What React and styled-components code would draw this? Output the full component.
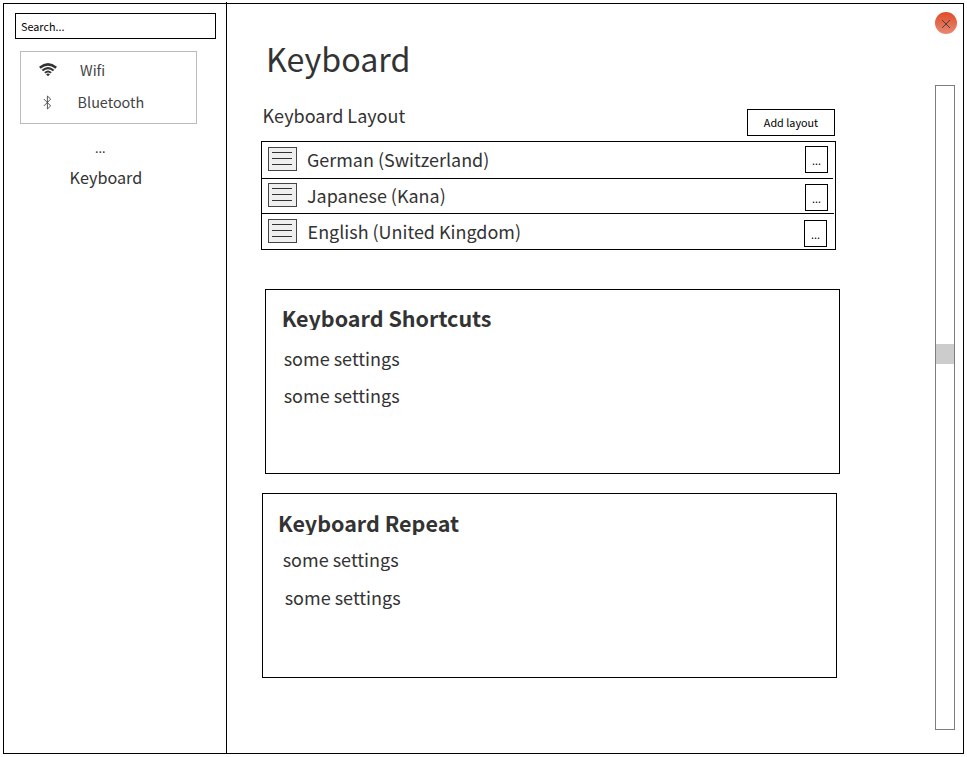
import React from "react";
import styled, { createGlobalStyle } from "styled-components";

const GlobalStyle = createGlobalStyle`
  * { box-sizing: border-box; }
  body {
    margin: 0;
    background: #fff;
    color: #333;
    font-family: "Noto Sans CJK SC", "Noto Sans", sans-serif;
  }
  button, input { font-family: inherit; border-radius: 0; }
`;

const Window = styled.div`
  display: flex;
  width: 961px;
  height: 751px;
  margin: 3px;
  border: 1px solid #000;
`;

const Sidebar = styled.aside`
  flex: none;
  display: flex;
  flex-direction: column;
  align-items: flex-start;
  width: 223px;
  margin-top: -2px;
  padding: 11px 0 0 11px;
  border-right: 1px solid #000;
`;

const Search = styled.input`
  width: 201px;
  height: 26px;
  padding: 0 5px 1px;
  border: 1px solid #000;
  background: #fff;
  font-size: 10.8px;
  &::placeholder { color: #000; opacity: 1; }
`;

const Devices = styled.nav`
  width: 177px;
  height: 73px;
  margin: 12px 0 0 5px;
  padding-top: 2px;
  border: 1px solid #bbb;
`;

const Device = styled.div`
  display: flex;
  align-items: center;
  height: 32px;
  color: #444;
  font-size: 14.4px;
  line-height: 32px;
`;

const DeviceIcon = styled.span`
  display: flex;
  justify-content: center;
  width: ${(p) => p.$width}px;
  margin: 0 ${(p) => p.$gap}px 0 17px;
`;

const More = styled.div`
  margin: 14px 0 0 80px;
  font-size: 12.6px;
  line-height: 20px;
`;

const CurrentPage = styled.div`
  margin: 7px 0 0 54.6px;
  font-size: 16.2px;
  line-height: 24px;
`;

const Main = styled.main`
  flex: 1;
  display: flex;
  justify-content: space-between;
  padding-left: 34px;
`;

const Content = styled.div`
  width: 579px;
`;

const Title = styled.h1`
  margin: 30px 0 0 5px;
  font-size: 32.2px;
  font-weight: 400;
  line-height: 48px;
`;

const SectionHeader = styled.div`
  display: flex;
  justify-content: space-between;
  width: 574px;
  margin-top: 27px;
`;

const SectionTitle = styled.h2`
  margin: 0 0 0 1.6px;
  font-size: 18px;
  font-weight: 400;
  line-height: 12px;
`;

const AddButton = styled.button`
  width: 88px;
  height: 27px;
  padding: 0 0 2px;
  border: 1px solid #000;
  background: #fff;
  color: #000;
  font-size: 10.8px;
`;

const LayoutList = styled.div`
  width: 575px;
  height: 109px;
  margin-top: 5px;
  border: 1px solid #000;
`;

const LayoutRow = styled.div`
  display: flex;
  align-items: flex-start;
  height: ${(p) => p.$height}px;
  margin-right: ${(p) => p.$inset}px;
  padding-left: 6px;
  border-bottom: ${(p) => (p.$last ? "none" : "1px solid #000")};
`;

const Handle = styled.span`
  flex: none;
  display: flex;
  flex-direction: column;
  gap: 5px;
  width: 29px;
  height: 24px;
  margin-top: ${(p) => p.$top}px;
  padding: 4px 4px 0 3px;
  border: 1px solid #444;
  background: #efefef;
`;

const HandleLine = styled.i`
  height: 1px;
  background: #333;
`;

const LayoutName = styled.span`
  flex: 1;
  margin: ${(p) => p.$top}px 0 0 ${(p) => p.$left}px;
  font-size: 17.95px;
  line-height: 26px;
`;

const RowMenu = styled.button`
  flex: none;
  width: 23px;
  height: 27px;
  margin: ${(p) => p.$top}px ${(p) => p.$right}px 0 0;
  padding: 0;
  border: 1px solid #000;
  background: #fff;
  color: #000;
  font-size: 10.8px;
`;

const Card = styled.section`
  width: 575px;
  height: 185px;
  margin: ${(p) => p.$gap}px 0 0 ${(p) => p.$left}px;
  padding: ${(p) => p.$pad}px 0 0 15px;
  border: 1px solid #000;
`;

const CardTitle = styled.h2`
  height: 27px;
  margin: 0 0 0 ${(p) => p.$left}px;
  overflow: hidden;
  font-size: 21.5px;
  font-weight: 700;
  line-height: 30px;
`;

const Setting = styled.p`
  margin: ${(p) => p.$gap}px 0 0 ${(p) => p.$left}px;
  font-size: 18px;
  line-height: 26px;
`;

const Rail = styled.div`
  display: flex;
  flex-direction: column;
  align-items: flex-start;
  width: 28px;
  padding-top: 8px;
`;

const CloseButton = styled.button`
  display: flex;
  align-items: center;
  justify-content: center;
  width: 22px;
  height: 22px;
  padding: 1px 0 0;
  border: 0;
  && { border-radius: 50%; }
  background: linear-gradient(#df4c28, #e98872);
`;

const Scrollbar = styled.div`
  width: 20px;
  height: 645px;
  margin-top: 51px;
  padding-top: 258px;
  border: 1px solid #7d7d7d;
`;

const Thumb = styled.div`
  height: 20px;
  background: #ccc;
`;

const WifiIcon = () => (
  <svg width="18" height="14" viewBox="0 0 18 14" fill="none" stroke="#333">
    <path d="M0.8 4.8Q9-1.9 17.2 4.8" strokeWidth="2.7" />
    <path d="M3.4 7.5Q9 2.8 14.6 7.5" strokeWidth="2.1" />
    <path d="M5.9 9.9Q9 7.1 12.1 9.9" strokeWidth="1.9" />
    <path d="M7 11.2Q9 9.9 11 11.2L9 13.2Z" fill="#333" stroke="none" />
  </svg>
);

const BluetoothIcon = () => (
  <svg width="9" height="15" viewBox="0 0 9 15" fill="none" stroke="#444" strokeWidth="0.9">
    <path d="M0.8 4L7.7 10.9L4.4 14V1L7.7 4.1L0.8 11" />
  </svg>
);

const CloseIcon = () => (
  <svg width="10" height="10" viewBox="0 0 10 10" stroke="#444" strokeWidth="1">
    <path d="M1 1L9 9M9 1L1 9" />
  </svg>
);

const layouts = [
  { name: "German (Switzerland)", height: 37, inset: 2, handle: 5, text: 4, left: 10, menu: 4, right: 5 },
  { name: "Japanese (Kana)", height: 35, inset: 1, handle: 4, text: 3, left: 10, menu: 5, right: 6 },
  { name: "English (United Kingdom)", height: 35, inset: 0, handle: 5, text: 4, left: 10.6, menu: 6, right: 8 },
];

export default function App() {
  return (
    <>
      <GlobalStyle />
      <Window>
        <Sidebar>
          <Search placeholder="Search..." />
          <Devices>
            <Device>
              <DeviceIcon $width={20} $gap={22}><WifiIcon /></DeviceIcon>
              Wifi
            </Device>
            <Device>
              <DeviceIcon $width={18} $gap={21.6}><BluetoothIcon /></DeviceIcon>
              Bluetooth
            </Device>
          </Devices>
          <More>...</More>
          <CurrentPage>Keyboard</CurrentPage>
        </Sidebar>
        <Main>
          <Content>
            <Title>Keyboard</Title>
            <SectionHeader>
              <SectionTitle>Keyboard Layout</SectionTitle>
              <AddButton>Add layout</AddButton>
            </SectionHeader>
            <LayoutList>
              {layouts.map((l, i) => (
                <LayoutRow key={l.name} $height={l.height} $inset={l.inset} $last={i === layouts.length - 1}>
                  <Handle $top={l.handle}>
                    <HandleLine />
                    <HandleLine />
                    <HandleLine />
                  </Handle>
                  <LayoutName $top={l.text} $left={l.left}>{l.name}</LayoutName>
                  <RowMenu $top={l.menu} $right={l.right}>...</RowMenu>
                </LayoutRow>
              ))}
            </LayoutList>
            <Card $gap={39} $left={4} $pad={13}>
              <CardTitle $left={0.7}>Keyboard Shortcuts</CardTitle>
              <Setting $gap={15} $left={2.7}>some settings</Setting>
              <Setting $gap={11} $left={2.7}>some settings</Setting>
            </Card>
            <Card $gap={19} $left={1} $pad={14}>
              <CardTitle $left={0}>Keyboard Repeat</CardTitle>
              <Setting $gap={11} $left={4.7}>some settings</Setting>
              <Setting $gap={12} $left={6.7}>some settings</Setting>
            </Card>
          </Content>
          <Rail>
            <CloseButton aria-label="Close"><CloseIcon /></CloseButton>
            <Scrollbar><Thumb /></Scrollbar>
          </Rail>
        </Main>
      </Window>
    </>
  );
}
